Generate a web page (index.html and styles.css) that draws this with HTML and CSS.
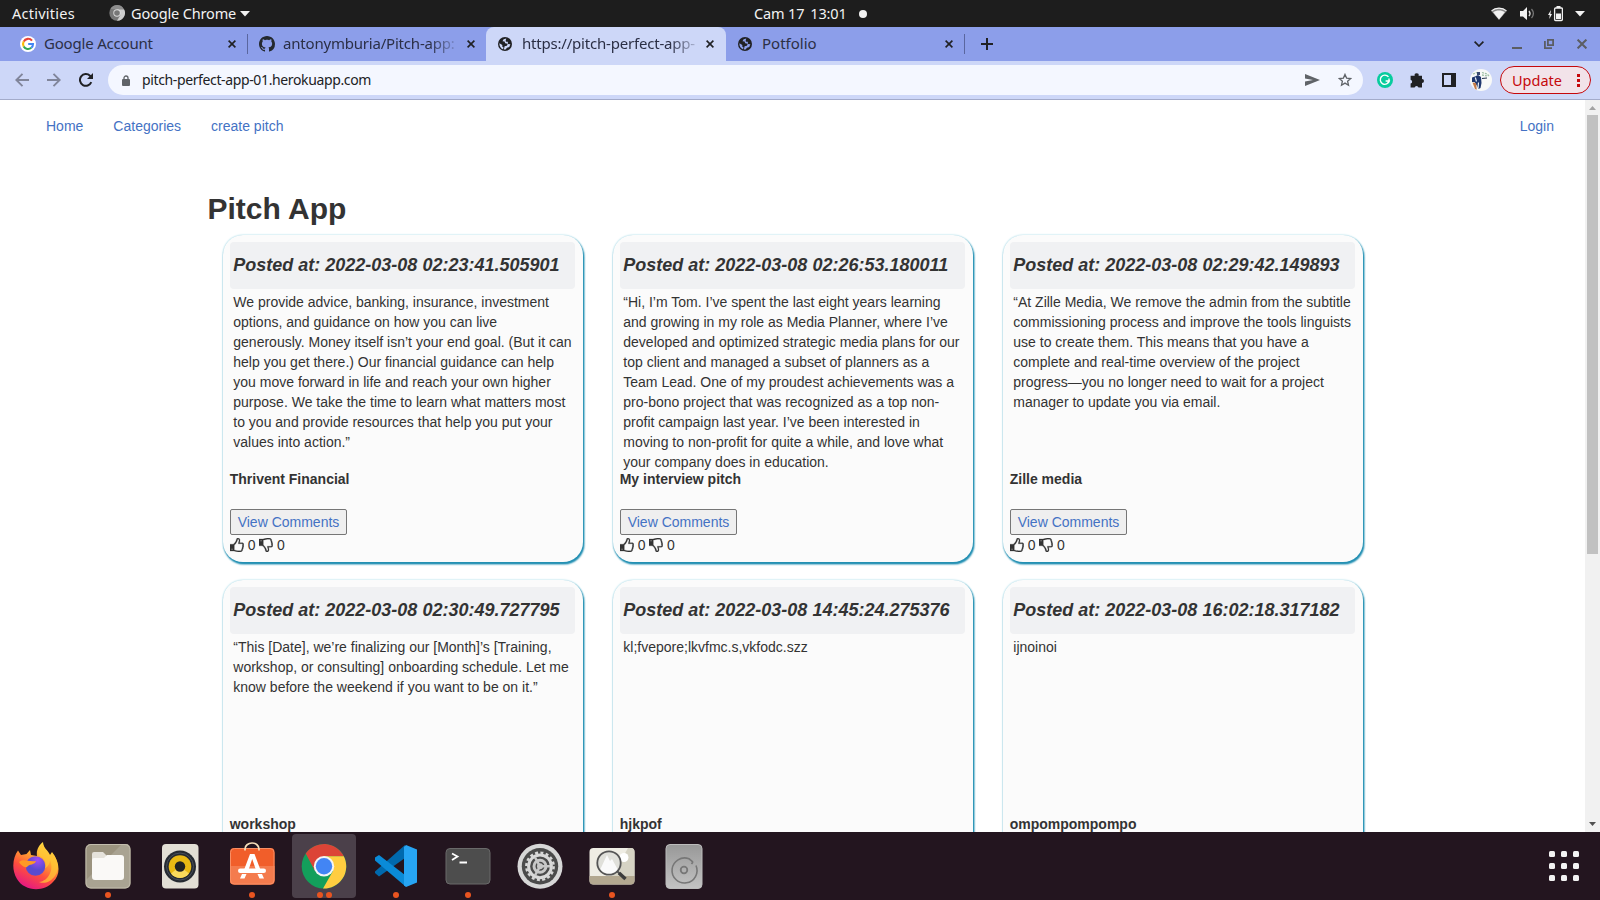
FILE: index.html
```html
<!DOCTYPE html>
<html lang="en">
<head>
<meta charset="utf-8">
<title>Pitch App</title>
<link rel="stylesheet" href="styles.css">
</head>
<body>
<svg class="defs" width="0" height="0">
  <defs>
    <symbol id="up" viewBox="0 0 14 14"><path fill="#333" stroke="#333" stroke-width=".25" fill-rule="evenodd" d="M0 6.200h3.300C4.800 5 5.300 4.200 5.900 3.100 6.400 2 6.200 0 7.900 0 9.700 0 10.100 1.300 10 2.700L9.700 4.700h2.500c1.300 0 2 1.200 1.400 2.300.4.700.3 1.500-.2 2.100.1.900-.1 1.500-.6 2 .1 1.800-1 2.800-2.700 2.800H8.300C6.200 13.900 5.300 13 4 13H0zM4.300 7v4.900c1.600.1 2.400.9 4.100.9h1.700c1.100 0 1.700-.7 1.400-1.900.7-.5.8-1.200.5-1.900.6-.6.7-1.400.1-2 .9-.4.700-1.200 0-1.200H8.300c0-1.500.7-2.300.7-3.400 0-.9-.3-1.300-1.200-1.200-.4 1-.4 2-1.200 3C6 5.300 5.300 6.600 4.300 7zM1.600 10.800v.9h.9v-.9z"/></symbol>
    <symbol id="globe" viewBox="0 0 14 14"><circle cx="7" cy="7" r="7" fill="#202124"/><path fill="var(--hole)" d="M8.300 1.500 5.600 2.200 4.500 4.300 6.600 4.600 7.200 6.300 9.800 6.800 8.900 8.700 6.600 9.300 5.800 12.500 7.600 12.600 9 10.800 11.300 10 12.400 7.300 10 6.900 9.800 4.800 7.900 4.700 7.700 3.200zM1.400 6.200 4.300 8.100 4.300 9.700 5.600 10.500 5 12.200C2.500 11.400 1.200 8.800 1.400 6.200z"/></symbol>
    <symbol id="x" viewBox="0 0 8 8"><path d="M.6.6l6.800 6.800M7.400.6L.6 7.400" stroke="#202124" stroke-width="1.600"/></symbol>
  </defs>
</svg>

<header class="topbar">
  <span class="activities">Activities</span>
  <svg class="chrome-grey" width="16" height="16" viewBox="0 0 16 16"><circle cx="8" cy="8" r="7.700" fill="#777"/><path d="M8 4.200h7A7.700 7.700 0 0 1 8 15.700L11.400 10z" fill="#ccc"/><path d="M1.400 4A7.700 7.700 0 0 1 15 4.200H8z" fill="#8d8d8d"/><circle cx="8" cy="8" r="3.700" fill="#ddd"/><circle cx="8" cy="8" r="2.800" fill="#777"/></svg>
  <span class="appname">Google Chrome</span>
  <svg class="tri" width="10" height="6"><path d="M0 0h10L5 5.500z" fill="#f2f2f2"/></svg>
  <div class="clock"><span>Cam 17</span><span>13:01</span><i></i></div>
  <div class="tray">
    <svg width="16" height="14" viewBox="0 0 16 14"><path d="M.3 4C4-.1 12-.1 15.700 4L8 13z" fill="#8a8a8a"/><path d="M2.200 5.200C5 3 11 3 13.800 5.200L8 12.500z" fill="#f2f2f2"/><path d="M.5 3.900C4.500.3 11.500.3 15.500 3.900" fill="none" stroke="#f2f2f2" stroke-width="1.200"/></svg>
    <svg width="15" height="14" viewBox="0 0 15 14"><path d="M0 4h3l4-4v13L3 9.500H0z" fill="#f2f2f2"/><path d="M9 4q2 2.500 0 5" fill="none" stroke="#ddd" stroke-width="1.400"/><path d="M11.500 2q3.800 4.500 0 9" fill="none" stroke="#777" stroke-width="1.300"/></svg>
    <svg width="15" height="16" viewBox="0 0 15 16"><path d="M3 4 0 9h1.700l-.4 4L4 8H2.400z" fill="#f2f2f2"/><path d="M8.500 0h4v2h-4z" fill="#f2f2f2"/><rect x="6.600" y="2" width="7.800" height="12.500" rx="1" fill="none" stroke="#f2f2f2" stroke-width="1.300"/><path d="M8 7.500h5V13H8z" fill="#f2f2f2"/></svg>
    <svg width="10" height="6"><path d="M0 0h10L5 5.500z" fill="#f2f2f2"/></svg>
  </div>
</header>

<div class="tabs">
  <div class="tab t1">
    <svg width="16" height="16" viewBox="0 0 16 16"><circle cx="8" cy="8" r="8" fill="#fff"/><g fill="none" stroke-width="2.100"><path d="M12 4.600A5 5 0 0 0 3.700 5.600" stroke="#ea4335"/><path d="M3.700 5.600a5 5 0 0 0 0 4.900" stroke="#fbbc05"/><path d="M3.700 10.500a5 5 0 0 0 7.600 1.300" stroke="#34a853"/><path d="M11.300 11.800A5 5 0 0 0 13 8H8.200" stroke="#4285f4"/></g></svg>
    <span class="label">Google Account</span><svg class="close" width="8" height="8"><use href="#x"/></svg>
  </div>
  <i class="sep"></i>
  <div class="tab t2">
    <svg width="16" height="16" viewBox="0 0 16 16"><path fill="#24292f" d="M8 0C3.580 0 0 3.580 0 8c0 3.540 2.290 6.530 5.470 7.590.4.070.55-.17.55-.38 0-.19-.01-.82-.01-1.490-2.010.37-2.530-.49-2.690-.94-.09-.23-.48-.94-.82-1.130-.28-.15-.68-.52-.01-.53.63-.01 1.080.58 1.230.82.72 1.210 1.870.87 2.330.66.07-.52.28-.87.51-1.070-1.780-.2-3.640-.89-3.640-3.950 0-.87.31-1.590.82-2.150-.08-.2-.36-1.020.08-2.120 0 0 .67-.21 2.200.82.64-.18 1.320-.27 2-.27s1.360.09 2 .27c1.530-1.040 2.200-.82 2.200-.82.44 1.100.16 1.920.08 2.120.51.56.82 1.270.82 2.150 0 3.070-1.870 3.750-3.650 3.950.29.25.54.73.54 1.480 0 1.070-.01 1.930-.01 2.200 0 .21.15.46.55.38A8.010 8.010 0 0 0 16 8c0-4.420-3.580-8-8-8z"/></svg>
    <span class="label fade">antonymburia/Pitch-app:</span><svg class="close" width="8" height="8"><use href="#x"/></svg>
  </div>
  <div class="tab active">
    <svg width="14" height="14"><use href="#globe"/></svg>
    <span class="label fade">https://pitch-perfect-app-</span><svg class="close" width="8" height="8"><use href="#x"/></svg>
  </div>
  <div class="tab t4">
    <svg width="14" height="14"><use href="#globe"/></svg>
    <span class="label">Potfolio</span><svg class="close" width="8" height="8"><use href="#x"/></svg>
  </div>
  <i class="sep"></i>
  <svg class="plus" width="12" height="12"><path d="M6 0v12M0 6h12" stroke="#202124" stroke-width="2"/></svg>
  <div class="winbtns">
    <svg width="10" height="6"><path d="M.6.6 5 5 9.400.6" fill="none" stroke="#202124" stroke-width="1.700"/></svg>
    <svg width="10" height="10"><path d="M0 9h10" stroke="#5b5d63" stroke-width="2"/></svg>
    <svg width="10" height="10"><path d="M3.900.9h5.200v5.200H3.900zM.9 2v7.100H8" fill="none" stroke="#5b5d63" stroke-width="1.800"/></svg>
    <svg width="10" height="10"><path d="M.6.600l8.800 8.800M9.400.6L.6 9.400" stroke="#5b5d63" stroke-width="2"/></svg>
  </div>
</div>

<div class="toolbar">
  <svg class="nav" width="14" height="14"><path d="M14 7H1.500M7.500.8 1.300 7l6.200 6.200" fill="none" stroke="#80859a" stroke-width="1.900"/></svg>
  <svg class="nav" width="14" height="14"><path d="M0 7h12.500M6.500.8 12.700 7l-6.200 6.200" fill="none" stroke="#80859a" stroke-width="1.900"/></svg>
  <svg class="reload" width="14" height="14"><path d="M12.300 9.200A5.900 5.900 0 1 1 11 2.700L12.300 4.500" fill="none" stroke="#202124" stroke-width="2"/><path d="M14 0v6H8z" fill="#202124"/></svg>
  <div class="omnibox">
    <svg width="8" height="11"><path d="M2 5V3a2 2 0 0 1 4 0v2" fill="none" stroke="#5f6368" stroke-width="1.300"/><rect y="4" width="8" height="7" rx="1" fill="#5f6368"/></svg>
    <span class="url">pitch-perfect-app-01.herokuapp.com</span>
    <svg class="send" width="15" height="12"><path d="M0 0 15 6 0 12V7.500L8 6 0 4.500z" fill="#5f6368"/></svg>
    <svg width="14" height="14" viewBox="0 0 14 14"><path d="M7 1.400 8.600 5.100l4.100.4L9.600 8.200l.9 4L7 10.100l-3.500 2.100.9-4L1.300 5.500l4.100-.4z" fill="none" stroke="#5f6368" stroke-width="1.300"/></svg>
  </div>
  <div class="exts">
    <svg width="16" height="16"><circle cx="8" cy="8" r="8" fill="#07cc9e"/><path d="M11.500 4.900A4.600 4.600 0 1 0 12.300 9H8.600M12 6.500V9.300L10.700 11" fill="none" stroke="#fff" stroke-width="1.400"/></svg>
    <svg width="15" height="15" viewBox="0 0 15 15"><path d="M1.500 2.800h3.200a2 2 0 1 1 3.900 0H12v3.300a2 2 0 1 1 0 4V14.500H8.500a2 2 0 0 0-3.900 0H.6V10.600a2 2 0 0 0 0-3.900V2.800z" fill="#202124"/></svg>
    <svg width="14" height="14"><path d="M1 1h12v12H1z" fill="none" stroke="#202124" stroke-width="2"/><path d="M9 1h5v12H9z" fill="#202124"/></svg>
    <svg width="22" height="22" viewBox="0 0 22 22"><circle cx="11" cy="11" r="11" fill="#f8f9f8"/><path d="M3 5l4-1.500M12 3.500l5 1.500 2 2M12 6l5 1" stroke="#9fc0a4" fill="none" stroke-width="1.300" stroke-dasharray="2 1"/><path d="M2 8.500 5 7.500 8 6l3 2 .5 6-1 5-2 1-2-4-2-3L2 13z" fill="#20386f"/><path d="M2.500 13.500 5 20l1.800.8L6 14z" fill="#c57b48"/><path d="M7 3h3v3H7z" fill="#3a4b72"/><path d="M8.500 13.500l-.5 6M5.300 8.500l1.200 4" stroke="#e8f0f6" stroke-width="1.200"/><path d="M12 9.500l5-.5" stroke="#25324c"/></svg>
  </div>
  <div class="update"><span>Update</span><svg width="3" height="13"><path d="M0 0h3v3H0zM0 5h3v3H0zM0 10h3v3H0z" fill="#c5080c"/></svg></div>
</div>

<div class="viewport">
  <main class="page">
    <nav class="navbar"><a>Home</a><a>Categories</a><a>create pitch</a><a class="login">Login</a></nav>
    <h1>Pitch App</h1>
    <div class="grid">
      <article class="card"><h2>Posted at: 2022-03-08 02:23:41.505901</h2><p>We provide advice, banking, insurance, investment options, and guidance on how you can live generously. Money itself isn’t your end goal. (But it can help you get there.) Our financial guidance can help you move forward in life and reach your own higher purpose. We take the time to learn what matters most to you and provide resources that help you put your values into action.”</p><b>Thrivent Financial</b><button>View Comments</button><div class="votes"><svg width="14" height="14"><use href="#up"/></svg>0<svg class="down" width="14" height="14"><use href="#up"/></svg>0</div></article>
      <article class="card"><h2>Posted at: 2022-03-08 02:26:53.180011</h2><p>“Hi, I’m Tom. I’ve spent the last eight years learning and growing in my role as Media Planner, where I’ve developed and optimized strategic media plans for our top client and managed a subset of planners as a Team Lead. One of my proudest achievements was a pro-bono project that was recognized as a top non-profit campaign last year. I’ve been interested in moving to non-profit for quite a while, and love what your company does in education.</p><b>My interview pitch</b><button>View Comments</button><div class="votes"><svg width="14" height="14"><use href="#up"/></svg>0<svg class="down" width="14" height="14"><use href="#up"/></svg>0</div></article>
      <article class="card"><h2>Posted at: 2022-03-08 02:29:42.149893</h2><p>“At Zille Media, We remove the admin from the subtitle commissioning process and improve the tools linguists use to create them. This means that you have a complete and real-time overview of the project progress—you no longer need to wait for a project manager to update you via email.</p><b>Zille media</b><button>View Comments</button><div class="votes"><svg width="14" height="14"><use href="#up"/></svg>0<svg class="down" width="14" height="14"><use href="#up"/></svg>0</div></article>
      <article class="card"><h2>Posted at: 2022-03-08 02:30:49.727795</h2><p>“This [Date], we’re finalizing our [Month]’s [Training, workshop, or consulting] onboarding schedule. Let me know before the weekend if you want to be on it.”</p><b>workshop</b></article>
      <article class="card"><h2>Posted at: 2022-03-08 14:45:24.275376</h2><p>kl;fvepore;lkvfmc.s,vkfodc.szz</p><b>hjkpof</b></article>
      <article class="card"><h2>Posted at: 2022-03-08 16:02:18.317182</h2><p>ijnoinoi</p><b>ompompompompo</b></article>
    </div>
  </main>
  <div class="scrollbar">
    <svg width="7" height="4"><path d="M3.500 0 7 4H0z" fill="#a3a3a3"/></svg>
    <i></i>
    <svg width="7" height="4"><path d="M0 0h7L3.500 4z" fill="#505050"/></svg>
  </div>
</div>

<footer class="dock">
  <div class="app"><svg width="48" height="48" viewBox="0 0 48 48">
    <defs><linearGradient id="ff" x1=".8" y1="0" x2=".3" y2="1"><stop offset="0" stop-color="#fff44f"/><stop offset=".35" stop-color="#ffa930"/><stop offset=".65" stop-color="#ff4f3d"/><stop offset="1" stop-color="#e31587"/></linearGradient><radialGradient id="fp" cx=".6" cy=".2"><stop offset="0" stop-color="#a44cf5"/><stop offset="1" stop-color="#5a4bd0"/></radialGradient></defs>
    <path d="M6 8.500 9 13 14.500 12 18 8 19 13 25 14C24 8 27 3 31 0c0 6 5 8 7 13l2-3c8 10 9 23 1 30-10 11-29 9-36-3C-1 27 1 15 6 8.500z" fill="url(#ff)"/>
    <circle cx="23.500" cy="24" r="9.800" fill="url(#fp)"/>
    <path d="M7 20c4-4 9 0 17-1-1 4-7 3-9 6-3 1-6-2-8-5z" fill="#ff9a25"/><path d="M27 14c5 1 8 7 6 12 3-1 5-5 5-8 4 9-1 21-11 22 10 4 20-7 19-17-1-5-3-9-6-12l-2 3C36 9 31 7 31 1c-3 3-5 7-4 13z" fill="#ffc536" opacity=".75"/></svg></div>
  <div class="app"><svg width="48" height="48" viewBox="0 0 48 48"><rect x="1.500" y="2" width="45" height="44.500" rx="5" fill="#9b937f"/><path d="M2 38 38 2h4q4 0 4 5v35q0 4-4 4H6q-4 0-4-4z" fill="#a9a392"/><rect x="2" y="2.500" width="44" height="43.500" rx="5" fill="none" stroke="#c3bdae"/><path d="M8 12q0-2 2-2h9l4 4h14q3 0 3 3v18H8z" fill="#e5e2db"/><path d="M8 18q0-2 2-2h10l3-3h14q3 0 3 3v19q0 3-3 3H11q-3 0-3-3z" fill="#faf9f7"/></svg><span class="dots"><i></i></span></div>
  <div class="app"><svg width="48" height="48" viewBox="0 0 48 48"><rect x="6" y="2" width="36.500" height="44.500" rx="4" fill="#e3dfd5"/><circle cx="24" cy="24.500" r="16" fill="#262a31"/><circle cx="24" cy="24.500" r="13.500" fill="none" stroke="#49505c"/><circle cx="24" cy="24.500" r="11.300" fill="#eab913"/><path d="M24 24.500 15 31.500a11.300 11.300 0 0 0 18 0z" fill="#fada5c"/><circle cx="24" cy="24.500" r="5.200" fill="#222"/></svg></div>
  <div class="app"><svg width="48" height="48" viewBox="0 0 48 48"><rect x="2" y="6" width="44.500" height="36.500" rx="4" fill="#f15e2a"/><path d="M2 24h44.500v14.500q0 4-4 4H6q-4 0-4-4z" fill="#f47b4d"/><rect x="2.500" y="6.500" width="43.500" height="35.500" rx="4" fill="none" stroke="#f88f65"/><path d="M17 8.500V7a7 6 0 0 1 14 0v1.500" fill="none" stroke="#f6dfba" stroke-width="1.700"/><path d="M22 12h4.500l6 16H28l-3.800-11-3.700 11H16zM14 32h4.500l-2 4.500H12zM29.500 32H34l2 4.500h-4.500z" fill="#fff"/><rect x="10" y="26.500" width="28" height="4.500" rx="2.200" fill="#fff"/></svg><span class="dots"><i></i></span></div>
  <div class="app current"><svg width="48" height="48" viewBox="0 0 48 48"><circle cx="24" cy="24.300" r="22.300" fill="#139f5b"/><path d="M5.700 11.500A22.300 22.300 0 0 1 43.800 14.200H24L15 29z" fill="#dc4437"/><path d="M24 14.200h19.800A22.300 22.300 0 0 1 23 46.600L33 29z" fill="#ffcd40"/><circle cx="24" cy="24.300" r="10.200" fill="#f5f5f5"/><circle cx="24" cy="24.300" r="8.200" fill="#4285f4"/></svg><span class="dots"><i></i><i></i></span></div>
  <div class="app"><svg width="48" height="48" viewBox="0 0 48 48"><path d="M3 29.500 33 3v13L7 34.500 3 31z" fill="#0069ad"/><path d="M3 18.500v-3L7 13l26 20v11z" fill="#0a8bd8"/><path d="M34 3 45 7.500v33L34 45l-2-1.500V5z" fill="#27a5f3"/></svg><span class="dots"><i></i></span></div>
  <div class="app"><svg width="48" height="48" viewBox="0 0 48 48"><rect x="2" y="6.500" width="44" height="35.500" rx="4" fill="#4d4d4d" stroke="#6a6a6a"/><path d="M8 11.500l5.500 3L8 18M15.500 20.500h7.500" fill="none" stroke="#fff" stroke-width="1.800"/></svg><span class="dots"><i></i></span></div>
  <div class="app"><svg width="48" height="48" viewBox="0 0 48 48"><circle cx="24" cy="24.300" r="22.500" fill="#d7d7d7"/><circle cx="24" cy="24.300" r="18.200" fill="#4b4b4b"/><circle cx="24" cy="24.300" r="11.400" fill="none" stroke="#d8d8d8" stroke-width="3"/><circle cx="24" cy="24.300" r="13.700" fill="none" stroke="#d8d8d8" stroke-width="2.400" stroke-dasharray="3 2.380"/><circle cx="24" cy="24.300" r="6" fill="none" stroke="#c8c8c8" stroke-width="3"/><circle cx="24" cy="24.300" r="3" fill="#c8c8c8"/><path d="M24 24.300h10M24 24.300l-5-9M24 24.300l-5 9" stroke="#c8c8c8" stroke-width="2.400"/></svg></div>
  <div class="app"><svg width="48" height="48" viewBox="0 0 48 48"><rect x="1.500" y="6" width="45" height="36.500" rx="4" fill="#efede4"/><path d="M24 34 40 6h3q3.500 0 3.500 4v24z" fill="#d6d3c4"/><path d="M1.500 34h45v4.500q0 4-4 4h-37q-4 0-4-4z" fill="#b3a890"/><circle cx="36" cy="15.500" r="4.500" fill="#fff"/><circle cx="21" cy="21" r="11.500" fill="#e0e0da"/><path d="M12 28l7-15 3 6 2-2 6 11q-8 8-18 0z" fill="#fafafa"/><circle cx="21" cy="21" r="11.700" fill="none" stroke="#555" stroke-width="1.800"/><path d="M29.500 29.500l2.500 2.500" stroke="#555" stroke-width="2"/><path d="M31 31l6.500 6" stroke="#3c3c3c" stroke-width="3.500"/></svg><span class="dots"><i></i></span></div>
  <div class="app"><svg width="48" height="48" viewBox="0 0 48 48"><defs><linearGradient id="dk" x2="0" y2="1"><stop stop-color="#989898"/><stop offset="1" stop-color="#c3c3c3"/></linearGradient></defs><rect x="6" y="2.500" width="36" height="44" rx="4" fill="url(#dk)" stroke="#bcbcbc"/><path d="M36 23.500A12.500 12.500 0 1 1 29 16.800L33 20M33 20l-1.500 2M33 20 31.500 19" fill="none" stroke="#777" stroke-width="1.600"/><circle cx="24" cy="28" r="3.300" fill="none" stroke="#777" stroke-width="1.800"/></svg></div>
  <div class="launcher"><i></i><i></i><i></i><i></i><i></i><i></i><i></i><i></i><i></i></div>
</footer>
</body>
</html>
```
FILE: styles.css
```css
* { box-sizing: border-box; }
body { margin: 0; width: 1600px; height: 900px; overflow: hidden; display: flex; flex-direction: column; font: 14px/20px "Liberation Sans", Arial, sans-serif; color: #333; background: #fff; }
svg { display: block; flex: none; }
i { display: block; flex: none; }
.defs { position: absolute; }

.topbar { height: 27px; flex: none; background: #1d1d1d; color: #f2f2f2; display: grid; grid-template-columns: 97px 16px 6px auto 4px 10px 1fr auto; align-items: center; padding: 0 15px 0 12px; position: relative; font: 14.500px/27px "Noto Sans", sans-serif; white-space: pre; }
.activities { letter-spacing: .25px; }
.chrome-grey { margin-top: -1px; }
.appname { grid-column: 4; letter-spacing: -.15px; }
.tri { grid-column: 6; }
.clock { position: absolute; left: 754px; top: 0; height: 27px; display: flex; align-items: center; gap: 6px; letter-spacing: -.15px; }
.clock i { width: 8px; height: 8px; border-radius: 50%; background: #f2f2f2; margin-left: 6px; }
.tray { grid-column: 8; display: flex; align-items: center; gap: 13px; }
.tray svg:nth-child(4) { margin-left: -1px; }

.tabs { height: 34px; flex: none; background: #8c9eea; display: flex; align-items: center; padding-left: 8px; font: 15px/32px "Noto Sans", sans-serif; --hole: #8c9eea; }
.tab { height: 34px; width: 239px; display: flex; align-items: center; padding: 0 11px 0 12px; white-space: nowrap; background: #8c9eea; color: #2b2f45; }
.tab .label { margin-left: 8px; flex: 1; letter-spacing: -.2px; height: 34px; }
.tab .close { margin-left: 6px; }
.fade { -webkit-mask-image: linear-gradient(90deg, #000 82%, transparent); mask-image: linear-gradient(90deg, #000 82%, transparent); }
.t2 { width: 238px; padding-left: 11px; border-bottom-right-radius: 8px; }
.tab.active { width: 240px; background: #cdd7f8; border-radius: 8px 8px 0 0; --hole: #cdd7f8; padding-right: 12px; }
.tab.active .label { margin-left: 10px; }
.tab.active .close { margin-left: 4px; }
.tab.t4 { width: 238px; border-bottom-left-radius: 8px; }
.tab.t4 .label { margin-left: 10px; letter-spacing: 0; }
.sep { width: 1px; height: 20px; background: #5a669f; }
.plus { margin-left: 16px; }
.winbtns { margin-left: auto; margin-right: 13px; display: flex; align-items: center; gap: 23px; }
.winbtns svg:nth-child(1) { margin-right: 5px; }
.winbtns svg:nth-child(2) { margin-right: -1px; }

.toolbar { height: 39px; flex: none; background: #cdd7f8; border-bottom: 1px solid #a3abca; display: flex; align-items: center; padding: 0 9px 0 15px; font: 14px/30px "Noto Sans", sans-serif; }
.nav { margin-right: 18px; }
.reload { margin-right: 15px; }
.omnibox { width: 1255px; height: 30px; border-radius: 15px; background: #f4f7ff; display: flex; align-items: center; padding: 0 11px 0 14px; color: #202124; }
.url { margin-left: 12px; flex: 1; letter-spacing: -.37px; }
.send { margin-right: 18px; }
.exts { display: flex; align-items: center; margin-left: 14px; gap: 17px; }
.exts svg:nth-child(4) { margin-left: -3px; }
.update { margin-left: auto; width: 91px; height: 28px; border: 1px solid #c5080c; border-radius: 14px; background: #f2e3e9; color: #c5080c; display: flex; align-items: center; justify-content: space-between; padding: 0 10px 0 11px; font-size: 14.500px; line-height: 26px; }
.update span { height: 27px; }

.viewport { height: 732px; flex: none; display: flex; overflow: hidden; }
.page { width: 1585px; background: #fff; }
.navbar { display: flex; gap: 30px; padding: 16px 31px 0 46px; height: 92px; color: #4472c4; }
.login { margin-left: auto; }
h1 { margin: 0 0 0 207.500px; font-size: 30px; line-height: 33px; height: 43px; }
.grid { display: grid; grid-template-columns: repeat(3, 360px); gap: 18px 30px; margin-left: 223px; }
.card { height: 327px; border-radius: 20px; background: #fbfbfb; padding: 7px; box-shadow: 1px 2px 2px #2490b3, 1px 2px 2px #2490b3, 0 0 2px #8fd0e0; display: flex; flex-direction: column; align-items: flex-start; }
.card h2 { margin: 0; width: 345px; height: 47px; flex: none; border-radius: 4px; background: #f0f1f3; padding: 13px 3.300px; font: italic bold 18px/20px "Liberation Sans", Arial, sans-serif; white-space: nowrap; }
.card p { margin: 3px 0 0 3.300px; width: 338.400px; height: 177px; flex: none; }
.card b { height: 40px; flex: none; margin-left: -.3px; }
.card button { width: 117px; height: 26px; flex: none; padding: 0; border: 1px solid #767676; border-radius: 2px; background: #efefef; color: #4472c4; font: 14px/20px "Liberation Sans", Arial, sans-serif; }
.votes { display: flex; align-items: center; height: 20px; margin-left: -.3px; }
.votes svg { margin-right: 4px; }
.votes .down { transform: scaleY(-1); margin-left: 3.500px; }
.scrollbar { width: 15px; background: #f1f1f1; display: flex; flex-direction: column; align-items: center; padding: 6px 0; }
.scrollbar i { width: 11px; height: 439px; background: #c1c1c1; margin-top: 5px; }
.scrollbar svg:last-child { margin-top: auto; }

.dock { height: 68px; flex: none; background: #23151f; display: flex; padding: 2px 21px 0 4px; gap: 8px; }
.app { width: 64px; height: 64px; border-radius: 4px; padding: 8px; position: relative; }
.current { background: #4b404a; }
.dots { position: absolute; left: 0; right: 0; bottom: 0; display: flex; justify-content: center; gap: 3px; }
.dots i { width: 6px; height: 6px; border-radius: 50%; background: #e95420; }
.launcher { margin-left: auto; margin-top: 17px; align-self: flex-start; display: grid; grid-template-columns: repeat(3, 6px); gap: 6px; }
.launcher i { width: 6px; height: 6px; border-radius: 1.500px; background: #f2f2f2; }
```
